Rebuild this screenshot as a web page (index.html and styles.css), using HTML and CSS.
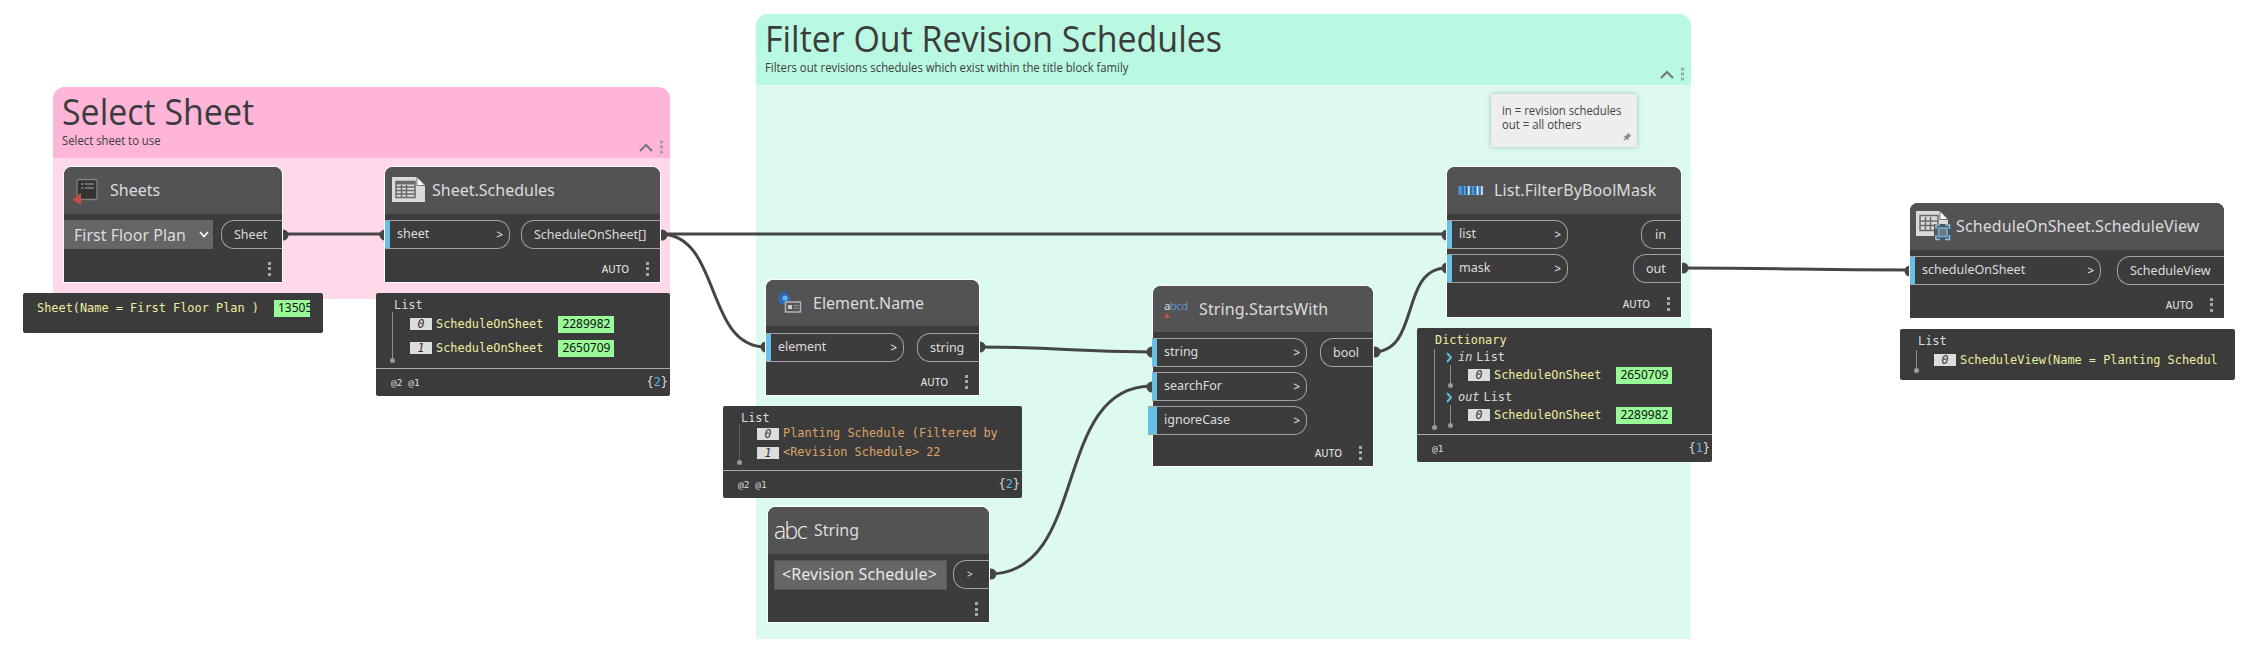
FILE: index.html
```html
<!DOCTYPE html>
<html lang="en">
<head>
<meta charset="utf-8">
<title>Graph</title>
<link rel="stylesheet" href="styles.css">
</head>
<body>
<main class="canvas">

  <section class="group group--pink">
    <header class="group-head">
      <h1 class="group-title">Select Sheet</h1>
      <p class="group-sub">Select sheet to use</p>
      <div class="group-tools">
        <svg width="14" height="9" viewBox="0 0 14 9"><path d="M1 8 7 2l6 6" fill="none" stroke="#777" stroke-width="2"/></svg>
        <svg width="4" height="14" viewBox="0 0 4 14"><path d="M.5 1h2v2h-2zM.5 6h2v2h-2zM.5 11h2v2h-2z" fill="none" stroke="#888" stroke-width=".8"/></svg>
      </div>
    </header>
  </section>

  <section class="group group--green">
    <header class="group-head">
      <h1 class="group-title">Filter Out Revision Schedules</h1>
      <p class="group-sub">Filters out revisions schedules which exist within the title block family</p>
      <div class="group-tools">
        <svg width="14" height="9" viewBox="0 0 14 9"><path d="M1 8 7 2l6 6" fill="none" stroke="#777" stroke-width="2"/></svg>
        <svg width="4" height="14" viewBox="0 0 4 14"><path d="M.5 1h2v2h-2zM.5 6h2v2h-2zM.5 11h2v2h-2z" fill="none" stroke="#888" stroke-width=".8"/></svg>
      </div>
    </header>
  </section>

  <svg class="wires" width="2242" height="664" viewBox="0 0 2242 664">
    <g fill="none" stroke="#454545" stroke-width="3">
      <path d="M283 234H385"/>
      <path d="M660 234H1447"/>
      <path d="M660 234C722 234 704 347 766 347"/>
      <path d="M979 347C1066 347 1066 352 1152 352"/>
      <path d="M989 574C1090 574 1051 386 1152 386"/>
      <path d="M1373 352C1421 352 1399 268 1447 268"/>
      <path d="M1681 268C1796 268 1796 270 1910 270"/>
    </g>
    <g fill="#454545">
      <circle cx="283" cy="235" r="5.5"/><circle cx="385" cy="235" r="5.5"/>
      <circle cx="662" cy="235" r="5.5"/><circle cx="1447" cy="235" r="5.5"/>
      <circle cx="766" cy="347" r="5.5"/><circle cx="980" cy="347" r="5.5"/>
      <circle cx="1152" cy="352" r="5.5"/><circle cx="1152" cy="387" r="5.5"/>
      <circle cx="991" cy="574" r="5.5"/><circle cx="1375" cy="352" r="5.5"/>
      <circle cx="1447" cy="268" r="5.5"/><circle cx="1683" cy="268" r="5.5"/>
      <circle cx="1910" cy="271" r="5.5"/>
    </g>
  </svg>

  <article class="node node--sheets">
    <header class="node-head">
      <svg width="28" height="28" viewBox="0 0 28 28"><rect x="5" y="1.500" width="20" height="20" rx="2" fill="#333" stroke="#808080" stroke-width="1.300"/><path d="M9 6h2.500M13 6h9M9 10h2.500M13 10h9" stroke="#858585" stroke-width="1.500"/><path d="M.5 22 9 14.500V27z" fill="#c64a4a"/></svg>
      <h2>Sheets</h2>
    </header>
    <div class="node-body">
      <div class="select">First Floor Plan<svg width="10" height="7" viewBox="0 0 10 7"><path d="m1 1 4 4.500L9 1" fill="none" stroke="#fff" stroke-width="1.600"/></svg></div>
      <div class="outs"><div class="out">Sheet</div></div>
    </div>
    <footer class="node-foot"><i class="dots"></i></footer>
  </article>

  <article class="node node--schedules">
    <header class="node-head">
      <svg width="33" height="25" viewBox="0 0 33 25"><path d="M0 0h25l8 8v17H0z" fill="#dadada"/><path d="M25 0v8.500h8z" fill="#fff" stroke="#555" stroke-width=".8"/><path d="M4 4.500h19v16H4zM4 10h19M4 13.500h19M4 17h19M9.500 8v12M14.500 8v12" fill="none" stroke="#6a6a6a" stroke-width="1.500"/><path d="M4 4.500h19v3H4z" fill="#6a6a6a"/></svg>
      <h2>Sheet.Schedules</h2>
    </header>
    <div class="node-body">
      <div class="ins"><div class="in">sheet<b>&gt;</b></div></div>
      <div class="outs"><div class="out">ScheduleOnSheet[]</div></div>
    </div>
    <footer class="node-foot">AUTO<i class="dots"></i></footer>
  </article>

  <article class="node node--name">
    <header class="node-head">
      <svg width="24" height="23" viewBox="0 0 24 23"><path d="M3.500 0h5v4h-5z" fill="#2d5f9c"/><circle cx="6" cy="8" r="6" fill="#2d6bb5"/><circle cx="7" cy="7" r="2.600" fill="#69b2f0"/><rect x="7.500" y="11" width="15" height="10" fill="#555" stroke="#b5b5b5" stroke-width="1.500"/><path d="M10 14h4v4h-4z" fill="#ccc"/><path d="M15.500 14.500h5M15.500 17h5" stroke="#999"/></svg>
      <h2>Element.Name</h2>
    </header>
    <div class="node-body">
      <div class="ins"><div class="in">element<b>&gt;</b></div></div>
      <div class="outs"><div class="out">string</div></div>
    </div>
    <footer class="node-foot">AUTO<i class="dots"></i></footer>
  </article>

  <article class="node node--string">
    <header class="node-head">
      <span class="abc">abc</span>
      <h2>String</h2>
    </header>
    <div class="node-body">
      <div class="field">&lt;Revision Schedule&gt;</div>
      <div class="outs"><div class="out out--bare">&gt;</div></div>
    </div>
    <footer class="node-foot"><i class="dots"></i></footer>
  </article>

  <article class="node node--starts">
    <header class="node-head">
      <span class="abcd"><span>a<em>bcd</em></span><svg width="6" height="5" viewBox="0 0 6 5"><path d="M3 0l3 5H0z" fill="#c9504c"/></svg></span>
      <h2>String.StartsWith</h2>
    </header>
    <div class="node-body">
      <div class="ins">
        <div class="in">string<b>&gt;</b></div>
        <div class="in">searchFor<b>&gt;</b></div>
        <div class="in in--open">ignoreCase<b>&gt;</b></div>
      </div>
      <div class="outs"><div class="out">bool</div></div>
    </div>
    <footer class="node-foot">AUTO<i class="dots"></i></footer>
  </article>

  <article class="node node--filter">
    <header class="node-head">
      <svg width="25" height="9" viewBox="0 0 25 9"><path d="M0 0h25v9H0z" fill="#3f86c4"/><path d="M5 1v7M8.500 1v7M13 1v7M17 1v7" stroke="#2a5680"/><path d="M2.500 1v7M15 0v9M6.500 0v9" stroke="#6ea6d8"/><path d="M10.800 0v9M19.500 0v9M24 0v9" stroke="#e8f0f8" stroke-width="1.500"/></svg>
      <h2>List.FilterByBoolMask</h2>
    </header>
    <div class="node-body">
      <div class="ins">
        <div class="in">list<b>&gt;</b></div>
        <div class="in">mask<b>&gt;</b></div>
      </div>
      <div class="outs"><div class="out out--in">in</div><div class="out out--out">out</div></div>
    </div>
    <footer class="node-foot">AUTO<i class="dots"></i></footer>
  </article>

  <article class="node node--view">
    <header class="node-head">
      <svg width="35" height="30" viewBox="0 0 35 30"><path d="M0 0h24l8 8v17H0z" fill="#dadada"/><path d="M24 0v8.500h8z" fill="#fff" stroke="#555" stroke-width=".8"/><path d="M4 4.500h18v15H4zM4 10h18M4 14.500h18M9.500 6v13M14.500 6v13" fill="none" stroke="#6a6a6a" stroke-width="1.500"/><path d="M18 13h17v16H18z" fill="#535353"/><rect x="22.500" y="17" width="8.500" height="8.500" fill="#777" stroke="#5fa9df" stroke-width="1.800"/><path d="M20 18v-4h4M29 14h4.500v4M33.500 24v4.500H29M24 28.500h-4V24" fill="none" stroke="#8cc5ea" stroke-width="1.500"/></svg>
      <h2>ScheduleOnSheet.ScheduleView</h2>
    </header>
    <div class="node-body">
      <div class="ins"><div class="in">scheduleOnSheet<b>&gt;</b></div></div>
      <div class="outs"><div class="out">ScheduleView</div></div>
    </div>
    <footer class="node-foot">AUTO<i class="dots"></i></footer>
  </article>

  <aside class="note">
    <p>in = revision schedules<br>out = all others</p>
    <svg width="10" height="10" viewBox="0 0 10 10"><path d="M5.500.5 9.500 4 8 4.500 6.500 6.500 6 8.500 4.300 7 .8 9.500 3.200 5.800 1.500 4l2.500-.3L5.500 2z" fill="#8a8a8a"/></svg>
  </aside>

  <div class="preview preview--sheets">
    <div class="row"><span class="val">Sheet(Name = First Floor Plan )</span><span class="id id--cut">13505</span></div>
  </div>

  <div class="preview preview--schedules">
    <div class="root">List</div>
    <div class="tree">
      <div class="row"><i class="idx">0</i><span class="val">ScheduleOnSheet</span><span class="id">2289982</span></div>
      <div class="row"><i class="idx">1</i><span class="val">ScheduleOnSheet</span><span class="id">2650709</span></div>
    </div>
    <div class="levels"><span>@2 @1</span><span class="count">{<b>2</b>}</span></div>
  </div>

  <div class="preview preview--name">
    <div class="root">List</div>
    <div class="tree">
      <div class="row"><i class="idx">0</i><span class="str">Planting Schedule (Filtered by</span></div>
      <div class="row"><i class="idx">1</i><span class="str">&lt;Revision Schedule&gt; 22</span></div>
    </div>
    <div class="levels"><span>@2 @1</span><span class="count">{<b>2</b>}</span></div>
  </div>

  <div class="preview preview--dict">
    <div class="root val">Dictionary</div>
    <div class="tree tree--keys">
      <div class="key"><svg width="7" height="11" viewBox="0 0 7 11"><path d="m1 1 4 4.500L1 10" fill="none" stroke="#5fb7e5" stroke-width="2"/></svg><i>in</i>List</div>
      <div class="tree"><div class="row"><i class="idx">0</i><span class="val">ScheduleOnSheet</span><span class="id">2650709</span></div></div>
      <div class="key"><svg width="7" height="11" viewBox="0 0 7 11"><path d="m1 1 4 4.500L1 10" fill="none" stroke="#5fb7e5" stroke-width="2"/></svg><i>out</i>List</div>
      <div class="tree"><div class="row"><i class="idx">0</i><span class="val">ScheduleOnSheet</span><span class="id">2289982</span></div></div>
    </div>
    <div class="levels"><span>@1</span><span class="count">{<b>1</b>}</span></div>
  </div>

  <div class="preview preview--view">
    <div class="root">List</div>
    <div class="tree">
      <div class="row"><i class="idx">0</i><span class="val val--cut">ScheduleView(Name = Planting Schedul</span></div>
    </div>
  </div>

</main>
</body>
</html>
```
FILE: styles.css
```css
* { box-sizing: border-box; }
body { margin: 0; background: #fff; }
h1, h2, p { margin: 0; font-weight: 400; }
svg { display: block; flex: none; }

.canvas {
  position: relative;
  width: 2242px;
  height: 664px;
  overflow: hidden;
  font-family: "Noto Sans", "Open Sans", sans-serif;
  white-space: nowrap;
}

/* groups */
.group { position: absolute; border-radius: 12px 12px 0 0; color: #3c3c3c; }
.group--pink { left: 53px; top: 87px; width: 617px; height: 212px; background: #ffd9e9; }
.group--green { left: 756px; top: 14px; width: 935px; height: 625px; background: #dcfbee; }
.group-head { position: relative; height: 71px; padding: 0 9px; border-radius: 12px 12px 0 0; font-family: "Open Sans", sans-serif; }
.group--pink .group-head { background: #ffb5d7; }
.group--green .group-head { background: #b9f8e1; }
.group-title { width: max-content; font-size: 37px; line-height: 47px; transform: scaleX(.917); transform-origin: 0 0; }
.group-sub { width: max-content; font-size: 12px; line-height: 14px; transform: scaleX(.942); transform-origin: 0 0; }
.group-tools { position: absolute; right: 6px; bottom: 4px; display: flex; align-items: center; gap: 7px; }

.wires { position: absolute; left: 0; top: 0; }

/* nodes */
.node {
  position: absolute;
  background: #3c3c3c;
  border-radius: 8px 8px 0 0;
  box-shadow: 0 0 0 1px #fff;
  color: #dcdcdc;
}
.node--sheets { left: 64px; top: 167px; width: 218px; height: 115px; --in: 149px; --out: 61px; }
.node--schedules { left: 385px; top: 167px; width: 275px; height: 115px; --in: 125px; --out: 139px; }
.node--name { left: 766px; top: 280px; width: 213px; height: 115px; --in: 138px; --out: 62px; }
.node--string { left: 768px; top: 507px; width: 221px; height: 115px; --out: 36px; }
.node--starts { left: 1153px; top: 286px; width: 220px; height: 180px; --in: 154px; --out: 53px; }
.node--filter { left: 1447px; top: 167px; width: 234px; height: 150px; --in: 121px; }
.node--view { left: 1910px; top: 203px; width: 314px; height: 115px; --in: 191px; --out: 107px; }

.node-head {
  display: flex;
  align-items: center;
  height: 47px;
  padding: 0 0 1px 7px;
  gap: 7px;
  background: #535353;
  border-radius: 8px 8px 0 0;
}
.node-head h2 { font-size: 16px; line-height: 24px; }
.node--sheets .node-head { padding-left: 8px; gap: 10px; }
.node--sheets svg { margin-top: 4px; }
.node--sheets .select svg { margin: 0; }
.node--schedules .node-head svg { margin-bottom: 1px; }
.node--name .node-head { height: 46px; padding-left: 12px; gap: 11px; }
.node--string .node-head { padding-left: 6px; gap: 8px; }
.node--starts .node-head { height: 46px; padding-left: 11px; gap: 12px; }
.node--filter .node-head { padding-left: 11px; gap: 11px; }
.node--view .node-head { padding-left: 6px; gap: 5px; }
.node--view h2 { letter-spacing: 0.1px; }
.node--starts h2 { letter-spacing: 0.1px; }
.node--filter h2 { letter-spacing: 0.1px; }
.abc { width: 32px; color: #f0f0f0; font: 23px/24px "Open Sans", sans-serif; font-weight: 300; letter-spacing: -1.6px; }
.abcd { display: flex; flex-direction: column; width: 23px; font: 11.500px/11px "Noto Sans", sans-serif; letter-spacing: -0.6px; gap: 2px; }
.abcd em { font-style: normal; color: #5b93cc; }

.node-body { display: flex; justify-content: space-between; padding-top: 6px; font-size: 12.500px; }
.node--name .node-body { padding-top: 7px; }
.ins, .outs { display: flex; flex-direction: column; align-items: flex-end; gap: 5px; }
.in {
  display: flex;
  align-items: center;
  justify-content: space-between;
  width: var(--in);
  height: 29px;
  padding: 0 6px 2px 12px;
  border: 1px solid #a2a2a2;
  border-left: 0;
  border-radius: 0 13px 13px 0;
  background: #3c3c3c;
  box-shadow: inset 5px 0 #68c0e8;
}
.node--starts .in { width: 155px; margin-left: -1px; }
.node--starts .in--open { width: 159px; margin-left: -5px; box-shadow: inset 9px 0 #68c0e8; padding-left: 16px; }
.in b { font-weight: 500; font-size: 12px; margin-top: 2px; }
.out {
  display: flex;
  align-items: center;
  width: var(--out);
  height: 29px;
  padding: 0 0 1px 12px;
  border: 1px solid #a2a2a2;
  border-right: 0;
  border-radius: 13px 0 0 13px;
}
.out--in { width: 40px; padding-left: 13px; }
.out--out { width: 48px; }
.out--bare { padding-left: 13px; font-size: 10px; }
.select {
  display: flex;
  align-items: center;
  justify-content: space-between;
  width: var(--in);
  height: 29px;
  padding: 0 4px 0 10px;
  background: #666;
  font-size: 16px;
}
.field { width: 173px; height: 30px; margin-left: 6px; padding-left: 7px; background: #666; border: 1px solid #555; font-size: 16px; line-height: 27px; color: #e8e8e8; letter-spacing: 0.1px; }
.node-foot {
  position: absolute;
  right: 11px;
  bottom: 6px;
  display: flex;
  align-items: center;
  gap: 17px;
  height: 14px;
  font-size: 10px;
  font-weight: 500;
  line-height: 14px;
}
.dots { width: 3px; height: 14px; background: repeating-linear-gradient(#a8a8a8 0 3px, transparent 3px 5.500px); }

/* note */
.note {
  position: absolute;
  left: 1491px;
  top: 94px;
  width: 146px;
  height: 53px;
  padding: 10px 5px 5px 11px;
  background: #eee;
  box-shadow: 0 0 5px rgba(0, 0, 0, .25);
  color: #444;
  font: 500 12px/14px "Open Sans", sans-serif;
}
.note p { width: max-content; transform: scaleX(.945); transform-origin: 0 0; }
.note svg { margin: 0 0 0 auto; }

/* value previews */
.preview {
  position: absolute;
  display: flex;
  flex-direction: column;
  padding-top: 6px;
  background: #3b3b3b;
  border-radius: 2px;
  color: #dcdcdc;
  font: 11.900px/13px "DejaVu Sans Mono", monospace;
  overflow: hidden;
}
.preview--sheets { left: 23px; top: 293px; width: 300px; height: 40px; padding: 5px 12px 0 14px; }
.preview--schedules { left: 376px; top: 293px; width: 294px; height: 103px; --row: 24px; }
.preview--name { left: 723px; top: 406px; width: 299px; height: 92px; --row: 19px; }
.preview--dict { left: 1417px; top: 328px; width: 295px; height: 134px; --row: 20px; }
.preview--view { left: 1900px; top: 329px; width: 335px; height: 51px; --row: 20px; }
.root { height: 13px; padding-left: 18px; }
.tree { position: relative; margin-left: 16px; padding-left: 17px; border-left: 1px solid #8d8d8d; }
.tree::after { content: ""; position: absolute; left: -3px; bottom: -3px; width: 5px; height: 5px; border-radius: 50%; background: #9a9a9a; }
.preview--name .tree { border-color: #5d5d5d; }
.preview--name .root { height: 12px; }
.preview--view .root { height: 15px; }
.row { display: flex; align-items: center; height: var(--row, 20px); }
.idx { flex: none; width: 22px; height: 12px; margin-right: 4px; background: #dcdcdc; color: #333; font-size: 11.500px; line-height: 12px; text-align: center; }
.val { color: #eeeea0; }
.str { color: #dca369; }
.val--cut { width: 258px; }
.id { height: 17px; margin-left: 15px; padding: 0 4px; background: #98fb98; color: #111; font: 12px/16px "Noto Sans", sans-serif; overflow: hidden; }
.id--cut { width: 36px; }
.root.val { height: 15px; }
.tree--keys { margin-left: 17px; padding-left: 0; height: 78px; }
.tree--keys .tree { margin-left: 15px; }
.key { display: flex; align-items: center; height: 16px; padding-left: 11px; gap: 5px; }
.key i { margin-right: -1px; }
.tree + .key { margin-top: 4px; }
.levels {
  display: flex;
  justify-content: space-between;
  align-items: center;
  height: 28px;
  margin-top: auto;
  padding: 0 2px 0 15px;
  border-top: 1px solid #aaa;
  font-size: 9.500px;
}
.count { font-size: 11.900px; }
.count b { font-weight: 400; color: #5fb7e5; }
```
